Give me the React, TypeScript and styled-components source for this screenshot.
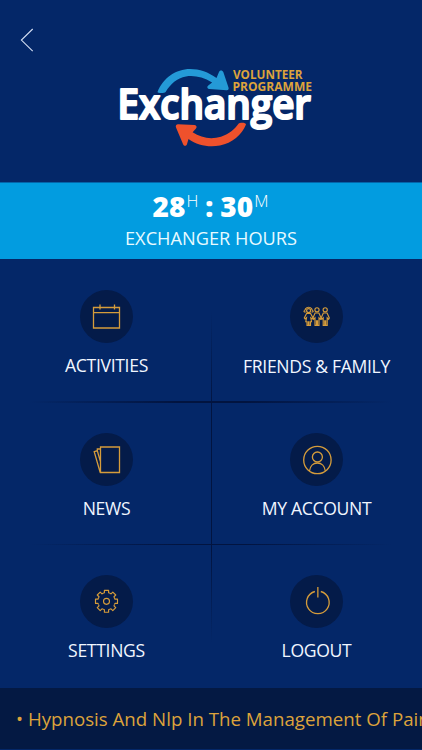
import React from "react";
import styled, { createGlobalStyle } from "styled-components";

const GlobalStyle = createGlobalStyle`
  * { box-sizing: border-box; }
  html, body { margin: 0; padding: 0; background: #042768; }
`;

const Screen = styled.main`
  width: 422px;
  height: 750px;
  display: flex;
  flex-direction: column;
  overflow: hidden;
  background: #042768;
  color: #f1f6ff;
  font-family: "Open Sans", "Noto Sans", sans-serif;
`;

const Header = styled.header`
  height: 182px;
  flex: none;
  display: grid;
  grid-template-columns: 110px 1fr;
  align-items: start;
`;

const BackButton = styled.button`
  margin: 28px 0 0 20px;
  padding: 0;
  width: 14px;
  height: 24px;
  border: 0;
  background: none;
  svg { display: block; }
`;

const Logo = styled.svg`
  display: block;
  margin-top: 60px;
  overflow: visible;
`;

const HoursBanner = styled.section`
  height: 77px;
  flex: none;
  display: flex;
  flex-direction: column;
  align-items: center;
  background: #029ce0;
  border-top: 1px solid #0465aa;
`;

const Clock = styled.div`
  display: flex;
  height: 42px;
  align-items: flex-start;
  padding: 4px 1px 0 0;
  font-size: 28px;
  line-height: 38px;
  font-weight: 800;
  color: #fff;
`;

const Unit = styled.span`
  font-size: 16.5px;
  line-height: 28px;
  font-weight: 300;
  margin-left: 1px;
`;

const Colon = styled.span`
  margin: 0 7px;
`;

const BannerLabel = styled.div`
  font-size: 18.2px;
  line-height: 26px;
  color: #e8faff;
`;

const Menu = styled.nav`
  height: 429px;
  flex: none;
  display: grid;
  grid-template-columns: 211px 211px;
  grid-template-rows: 143px 142px 144px;
  background:
    linear-gradient(90deg, transparent 7%, #021440 42%, #021440 58%, transparent 93%) 0 142px / 422px 2px no-repeat,
    linear-gradient(90deg, transparent 7%, #021440 42%, #021440 58%, transparent 93%) 0 285px / 422px 1px no-repeat,
    linear-gradient(180deg, transparent 12%, #021440 35%, #021440 68%, transparent 90%) 211px 0 / 1px 428px no-repeat;
`;

const MenuItem = styled.a<{ $gap: number }>`
  display: flex;
  flex-direction: column;
  align-items: center;
  padding-top: 31px;
  gap: ${(p) => p.$gap}px;
  color: inherit;
  text-decoration: none;
  &:nth-child(odd) { padding-left: 2px; }
`;

const IconDisc = styled.span`
  width: 53px;
  height: 53px;
  flex: none;
  border-radius: 50%;
  background: #041b49;
  svg {
    display: block;
    fill: none;
    stroke: #d59c3b;
    stroke-width: 1.3;
  }
`;

const ItemLabel = styled.span`
  font-size: 17.6px;
  letter-spacing: -0.33px;
  line-height: 24px;
  white-space: nowrap;
`;

const Ticker = styled.footer`
  height: 61px;
  flex: none;
  padding-left: 16px;
  overflow: hidden;
  background: #041943;
  color: #dda33b;
  font-size: 18.7px;
  line-height: 62px;
  white-space: nowrap;
`;

const Calendar = () => (
  <path d="M13.500 17.500h26v20.500h-26zM13.500 22.700h26M20 14.500v5M34.500 14.500v5" />
);

const Person = ({ x }: { x: number }) => (
  <g transform={`translate(${x} 0)`}>
    <circle cx="0" cy="19.8" r="2.1" />
    <path d="M-1.900 23h3.800l2.200 4.900-.7 1.300-1.400-1.300v7.500H.5v-4.600h-1v4.600H-2v-7.500l-1.400 1.300-.7-1.300z" />
  </g>
);

const Family = () => (
  <g strokeWidth="1.15">
    <path d="M15.600 21.800c-.8.5-1.500.1-1.600-.6 1-.3.9-1.400 1.700-2.600 1.300-1.800 4.600-1.800 5.800 0 .8 1.200.7 2.300 1.700 2.600-.1.700-.8 1.100-1.600.6" />
    <circle cx="18.6" cy="20.6" r="2" />
    <path d="M16.700 23.300h3.800l2.500 4.600-.7 1.100-1.500-1.200.7 3.900h-1v3.700h-1.500v-3.700h-.6v3.700H17v-3.700h-1.200l.7-3.900-1.400 1.200-.8-1.100z" />
    <Person x={27} />
    <Person x={35.2} />
  </g>
);

const Papers = () => (
  <path d="M20.500 14h19v25.500h-19zM20.500 16h-3.200v1.700l-3.100 1 6 20.800M17.300 17.700l3.200 11" />
);

const Account = () => (
  <>
    <circle cx="27.4" cy="27" r="13.7" />
    <circle cx="27.4" cy="24" r="5" />
    <path d="M19.500 38c.5-4.800 3.700-8 7.900-8s7.400 3.200 7.900 8" />
  </>
);

const Gear = () => (
  <g transform="translate(26.500 26.300)" strokeWidth="1.15" strokeLinejoin="round">
    {[0, 45, 90, 135, 180, 225, 270, 315].map((a) => (
      <path key={a} d="M-3.300-7.950L-2.100-8.500V-11H2.100V-8.500L3.300-7.950" transform={`rotate(${a})`} />
    ))}
    <circle r="3" />
  </g>
);

const Power = () => (
  <path d="M24.900 16.500a11.300 11.300 0 1 0 5.900 0M27.850 12v10.500" />
);

const items = [
  { label: "ACTIVITIES", Icon: Calendar, gap: 10 },
  { label: "FRIENDS & FAMILY", Icon: Family, gap: 10.5 },
  { label: "NEWS", Icon: Papers, gap: 10 },
  { label: "MY ACCOUNT", Icon: Account, gap: 10 },
  { label: "SETTINGS", Icon: Gear, gap: 10 },
  { label: "LOGOUT", Icon: Power, gap: 10 },
];

export default function App() {
  return (
    <>
      <GlobalStyle />
      <Screen>
        <Header>
          <BackButton aria-label="Back">
            <svg width="14" height="24" viewBox="0 0 14 24" fill="none" stroke="#d5dff3" strokeWidth="1.1">
              <path d="M12.700 1L1.400 12.100L12.700 23.200" />
            </svg>
          </BackButton>
          <Logo width="210" height="95" viewBox="0 0 210 95" fontFamily='"Open Sans", sans-serif' fontWeight="700">
            <path
              fill="#249ad7"
              d="M47.500 32C53 18 66 9 80 9c9.500 0 18.500 3.200 26.500 9l2.600-6.200c.9-2 3.500-1.700 4.200.2l5.200 15.600c.6 1.600-.4 2.900-2 2.700l-17-1.200c-2.200-.3-2.900-2.300-1.200-3.600l3.800-3C93 17 84 15.200 76 16.500c-9 1.600-15.500 7.500-20.400 15.500-1 1.300-8 1.200-8.100 0z"
            />
            <path
              fill="#ef512c"
              d="M136 64.500C132 75 122 83 110 85.500c-11.500 2.300-22.500-.3-31.500-6.500l-1.600 5.400c-.8 1.800-3 1.700-3.700 0L66 67.500c-.7-1.800.3-3.400 2.200-3.300l16.300.9c2.100.2 2.800 2.300 1.300 3.600l-3.200 3.600c8.500 5.700 18.500 7.400 28.400 4.400 8.500-2.700 13.500-7.500 17.500-12.900 1.500-1.500 7.600-1.200 7.500.7z"
            />
            <text x="123" y="19.200" fontSize="11.800" fill="#dda33b" textLength="69.500" lengthAdjust="spacingAndGlyphs">VOLUNTEER</text>
            <text x="122.500" y="30.700" fontSize="11.800" fill="#dda33b" textLength="79.500" lengthAdjust="spacingAndGlyphs">PROGRAMME</text>
            <text
              x="7.500"
              y="58.700"
              fontSize="41.500"
              fontWeight="600"
              fill="#fff"
              stroke="#fff"
              strokeWidth="2.200"
              strokeLinejoin="round"
              textLength="193.500"
              lengthAdjust="spacingAndGlyphs"
            >Exchanger</text>
          </Logo>
        </Header>
        <HoursBanner>
          <Clock>
            28<Unit>H</Unit>
            <Colon>:</Colon>
            30<Unit>M</Unit>
          </Clock>
          <BannerLabel>EXCHANGER HOURS</BannerLabel>
        </HoursBanner>
        <Menu>
          {items.map(({ label, Icon, gap }) => (
            <MenuItem key={label} $gap={gap}>
              <IconDisc>
                <svg width="53" height="53" viewBox="0 0 53 53">
                  <Icon />
                </svg>
              </IconDisc>
              <ItemLabel>{label}</ItemLabel>
            </MenuItem>
          ))}
        </Menu>
        <Ticker>• Hypnosis And Nlp In The Management Of Pain</Ticker>
      </Screen>
    </>
  );
}
